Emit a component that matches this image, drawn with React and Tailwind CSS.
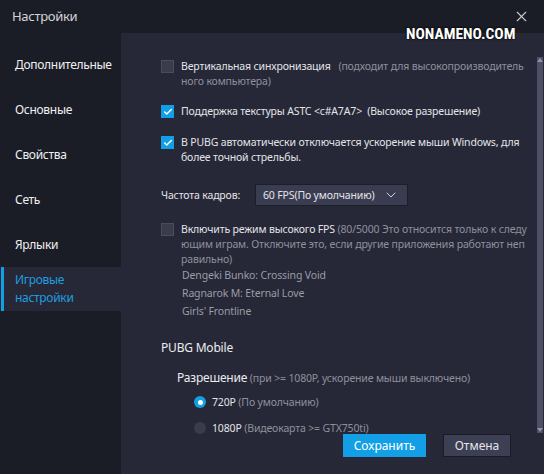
import { X, ChevronDown, Check } from 'lucide-react'

const menu = ["Дополнительные", "Основные", "Свойства", "Сеть", "Ярлыки"];

function Box({ checked }) {
  if (checked) {
    return (
      <span className="w-[13px] h-[13px] shrink-0 bg-[#139fe6] flex items-center justify-center mt-[1px]">
        <Check size={10} strokeWidth={3.5} className="text-white" />
      </span>
    );
  }
  return <span className="w-[13px] h-[13px] shrink-0 bg-[#3a3c4c] border border-[#4b4d5c] mt-[1px]" />;
}

export default function App() {
  return (
    <div
      className="w-[544px] h-[474px] bg-[#1b1d26] relative overflow-hidden text-[#e4e4e8]"
      style={{ fontFamily: '"Noto Sans", "Open Sans", sans-serif' }}
    >
      {/* title */}
      <div className="h-[33px] flex items-center justify-between pl-[12px] pr-[14px]">
        <span className="text-[13px] tracking-[-0.3px] text-[#d4d4d8]">Настройки</span>
        <X size={17} strokeWidth={1.6} className="text-[#c8c8cc]" />
      </div>
      <div
        className="absolute left-[406px] top-[23px] text-[15.5px] font-bold text-white z-10"
        style={{ fontFamily: '"Liberation Sans Narrow", "Roboto Condensed", "Liberation Sans", sans-serif', textShadow: '0 0 2px #000, 0 0 2px #000' }}
      >
        NONAMENO.COM
      </div>

      <div className="flex h-[441px]">
        {/* sidebar */}
        <aside className="w-[121px] shrink-0 pt-[9px] text-[12px] tracking-[-0.3px]">
          {menu.map((m) => (
            <div key={m} className="h-[45px] flex items-center pl-[15px] text-[#f0f0f2]">
              {m}
            </div>
          ))}
          <div className="h-[44px] flex items-center pl-[15px] bg-[#262837] relative leading-[18px] text-[#1e9ee0]">
            <span className="absolute left-[1px] top-0 bottom-0 w-[3px] bg-[#139fe6]" />
            <span>Игровые<br />настройки</span>
          </div>
        </aside>

        {/* content */}
        <main className="flex-1 bg-[#262837] relative overflow-hidden pl-[40px] pt-[26px] text-[10.5px] tracking-[-0.15px] leading-[15px]">
          <div className="flex gap-[7px]">
            <Box />
            <div className="whitespace-nowrap">
              <span className="text-[#e4e4e8]">Вертикальная синхронизация</span>
              <span className="text-[#8e909c] whitespace-pre">{"   "}(подходит для высокопроизводитель</span>
              <br />
              <span className="text-[#8e909c]">ного компьютера)</span>
            </div>
          </div>

          <div className="flex gap-[7px] mt-[15px]">
            <Box checked />
            <div className="whitespace-pre">Поддержка текстуры ASTC &lt;c#A7A7&gt;  (Высокое разрешение)</div>
          </div>

          <div className="flex gap-[7px] mt-[16px]">
            <Box checked />
            <div className="whitespace-nowrap">
              В PUBG автоматически отключается ускорение мыши Windows, для
              <br />
              более точной стрельбы.
            </div>
          </div>

          <div className="flex items-center mt-[19px]">
            <span className="w-[94px]">Частота кадров:</span>
            <div className="w-[153px] h-[22px] bg-[#3a3d51] border border-[#1c1e28] flex items-center justify-between pl-[7px] pr-[8px]">
              <span>60 FPS(По умолчанию)</span>
              <ChevronDown size={16} strokeWidth={1.5} className="text-[#d0d0d6]" />
            </div>
          </div>

          <div className="flex gap-[7px] mt-[16px]">
            <Box />
            <div className="whitespace-nowrap text-[#8e909c]">
              <span className="text-[#e4e4e8]">Включить режим высокого FPS</span> (80/5000 Это относится только к следу
              <br />
              ющим играм. Отключите это, если другие приложения работают неп
              <br />
              равильно)
            </div>
          </div>

          <div className="pl-[21px] leading-[18px] text-[#9a9ca6] mt-[-1px]">
            <div>Dengeki Bunko: Crossing Void</div>
            <div>Ragnarok M: Eternal Love</div>
            <div>Girls' Frontline</div>
          </div>

          <div className="mt-[19px] text-[12px] tracking-[-0.2px] leading-[18px] text-[#ececf0]">PUBG Mobile</div>

          <div className="mt-[12px] pl-[16px] leading-[18px] whitespace-nowrap">
            <span className="text-[12px] tracking-[-0.2px] text-[#ececf0]">Разрешение</span>
            <span className="text-[#8e909c]"> (при &gt;= 1080P, ускорение мыши выключено)</span>
          </div>

          <div className="mt-[7px] pl-[33px] flex items-center gap-[6px] leading-[16px]">
            <span className="w-[12px] h-[12px] rounded-full bg-[#139fe6] flex items-center justify-center">
              <span className="w-[5px] h-[5px] rounded-full bg-white" />
            </span>
            <span>
              720P <span className="text-[#8e909c]">(По умолчанию)</span>
            </span>
          </div>

          <div className="mt-[10px] pl-[33px] flex items-center gap-[6px] leading-[16px]">
            <span className="w-[12px] h-[12px] rounded-full bg-[#3a3c4c]" />
            <span>
              1080P <span className="text-[#8e909c]">(Видеокарта &gt;= GTX750ti)</span>
            </span>
          </div>

          {/* scrollbar */}
          <div className="absolute right-[1px] top-[24px] w-[6px] h-[376px] bg-[#4c4f66] flex flex-col justify-between items-center">
            <span className="w-0 h-0 border-l-[3px] border-r-[3px] border-b-[4px] border-l-transparent border-r-transparent border-b-[#8f92a8] mt-[1px]" />
            <span className="w-0 h-0 border-l-[3px] border-r-[3px] border-t-[4px] border-l-transparent border-r-transparent border-t-[#8f92a8] mb-[1px]" />
          </div>

          {/* footer buttons */}
          <div className="absolute left-[222px] top-[401px] flex gap-[17px] text-[12px] tracking-normal">
            <button className="w-[83px] h-[23px] bg-[#139fe6] text-white">Сохранить</button>
            <button className="w-[68px] h-[23px] bg-[#3d4054] border border-[#1a1c24] text-[#e4e4e8]">Отмена</button>
          </div>
        </main>
      </div>
    </div>
  );
}
